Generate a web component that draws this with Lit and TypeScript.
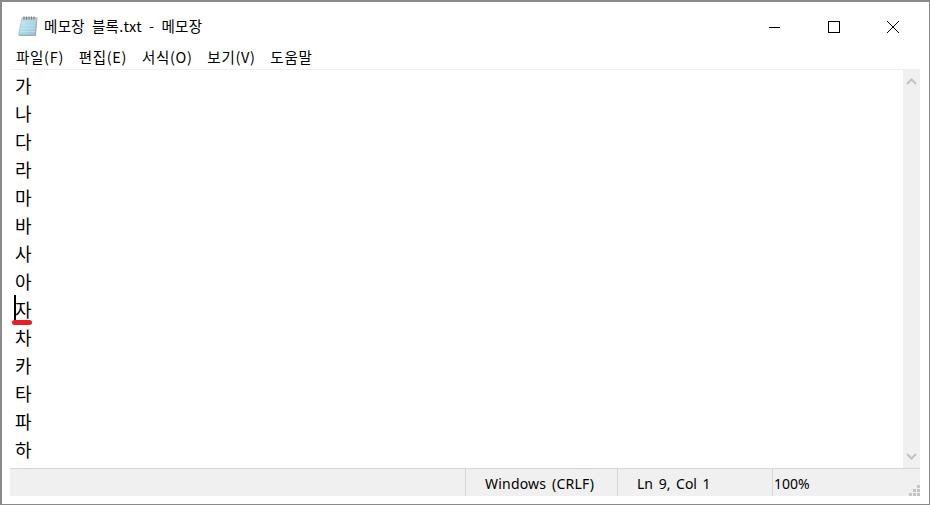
import { LitElement, html, css, svg } from 'lit'
import { customElement } from 'lit/decorators.js'

const MENUS = ['파일(F)', '편집(E)', '서식(O)', '보기(V)', '도움말']
const LINES = ['가', '나', '다', '라', '마', '바', '사', '아', '자', '차', '카', '타', '파', '하']

const notepadIcon = svg`
    <svg class="app-icon" width="20" height="21" viewBox="0 0 20 21">
        <defs>
            <linearGradient id="pad" x1="0" y1="0" x2="1" y2="1">
                <stop offset="0" stop-color="#d4edf4" />
                <stop offset="0.55" stop-color="#a9d8e6" />
                <stop offset="1" stop-color="#8cc3d8" />
            </linearGradient>
        </defs>
        <path d="M4.5 1.5 L19.5 1.5 L18 20 L1 20 Z" fill="#b3a98e" />
        <path d="M4 2 L18.5 2 L17 19 L0.5 19 Z" fill="url(#pad)" stroke="#8fb7c6" stroke-width="0.6" />
        <path d="M3 9.5H17.5M2.6 12.5H17.2M2.2 15.5H17" stroke="#c4e4ee" stroke-width="0.7" />
        <path d="M4.5 1 L18.5 1 L18.2 4.5 L4 4.5 Z" fill="#c5cccf" />
        <path d="M6 0.5v3M8.5 0.5v3M11 0.5v3M13.5 0.5v3M16 0.5v3" stroke="#707c82" stroke-width="1.2" />
    </svg>
`

@customElement('app-root')
export class AppRoot extends LitElement {
    static get styles() {
        return css`
            :host {
                display: block;
                width: 930px;
                height: 506px;
                background: #fff;
                font-family: 'Noto Sans CJK KR', 'Liberation Sans', sans-serif;
                color: #000;
            }

            .window {
                box-sizing: border-box;
                width: 930px;
                height: 505px;
                border: 2px solid #8a8a8a;
                border-width: 2px 1px 1px 2px;
                background: #fff;
                display: flex;
                flex-direction: column;
            }

            .titlebar {
                height: 42px;
                display: flex;
                align-items: center;
                padding: 8px 0 0 16px;
                box-sizing: border-box;
                flex: none;
            }

            .app-icon {
                flex: none;
                margin-right: 6px;
                margin-top: -1px;
            }

            .title {
                font-size: 14.5px;
                line-height: 20px;
                flex: 1;
                white-space: nowrap;
                word-spacing: 3.5px;
                letter-spacing: 0.3px;
                margin-top: -2px;
            }

            .controls {
                display: flex;
                align-items: center;
                margin-right: 7px;
            }

            .controls svg {
                display: block;
            }

            .control {
                width: 59px;
                display: flex;
                justify-content: center;
            }

            .menubar {
                height: 25px;
                display: flex;
                gap: 14.7px;
                align-items: center;
                padding-left: 14px;
                font-size: 14.5px;
                letter-spacing: 0.7px;
                flex: none;
                white-space: nowrap;
            }

            .body {
                flex: 1;
                display: flex;
                flex-direction: column;
                margin: 0 9px 8px 8px;
                min-height: 0;
            }

            .editor-wrap {
                flex: 1;
                display: flex;
                border-top: 1px solid #f0f0f0;
                min-height: 0;
            }

            .editor {
                flex: 1;
                padding: 1px 0 0 5px;
                font-size: 18px;
                line-height: 28px;
                overflow: hidden;
            }

            .line {
                height: 28px;
                position: relative;
            }

            .caret {
                position: absolute;
                left: -1px;
                top: 0;
                width: 2px;
                height: 25px;
                background: #000;
            }

            .underline {
                position: absolute;
                left: -3px;
                top: 25px;
                width: 20px;
                height: 5px;
                border-radius: 2.5px;
                background: #ed1c24;
            }

            .scrollbar {
                width: 17px;
                background: #f0f0f0;
                display: flex;
                flex-direction: column;
                justify-content: space-between;
                align-items: center;
                padding: 8px 0;
                box-sizing: border-box;
            }

            .statusbar {
                height: 28px;
                flex: none;
                background: #f0f0f0;
                border-top: 1px solid #d7d7d7;
                box-sizing: border-box;
                display: flex;
                font-family: 'Noto Sans', 'Liberation Sans', sans-serif;
                font-size: 14px;
                position: relative;
            }

            .cell {
                border-left: 1px solid #d7d7d7;
                box-sizing: border-box;
                display: flex;
                align-items: center;
                white-space: pre;
                padding-top: 1px;
            }

            .spacer {
                flex: none;
                width: 455px;
            }

            .eol {
                width: 152px;
                padding-left: 19px;
                word-spacing: 2px;
                letter-spacing: 0.2px;
            }

            .pos {
                width: 155px;
                padding-left: 19px;
                word-spacing: 2px;
            }

            .zoom {
                flex: 1;
                padding-left: 1px;
            }

            .grip {
                position: absolute;
                right: 0;
                bottom: 0;
            }
        `
    }

    render() {
        return html`
            <div class="window">
                <div class="titlebar">
                    ${notepadIcon}
                    <div class="title">메모장 블록.txt - 메모장</div>
                    <div class="controls">
                        <div class="control">
                            <svg width="12" height="12" viewBox="0 0 12 12"><path d="M0 6.5H11" stroke="#000" /></svg>
                        </div>
                        <div class="control">
                            <svg width="12" height="12" viewBox="0 0 12 12"><rect x="0.5" y="0.5" width="11" height="11" fill="none" stroke="#000" /></svg>
                        </div>
                        <div class="control">
                            <svg width="12" height="12" viewBox="0 0 12 12"><path d="M0 0L12 12M12 0L0 12" stroke="#000" /></svg>
                        </div>
                    </div>
                </div>
                <div class="menubar">
                    ${MENUS.map((m) => html`<span>${m}</span>`)}
                </div>
                <div class="body">
                    <div class="editor-wrap">
                        <div class="editor">
                            ${LINES.map(
                                (l, i) => html`
                                    <div class="line">
                                        ${l}
                                        ${i === 8
                                            ? html`<div class="caret"></div>
                                                  <div class="underline"></div>`
                                            : ''}
                                    </div>
                                `
                            )}
                        </div>
                        <div class="scrollbar">
                            <svg width="11" height="7" viewBox="0 0 11 7"><path d="M1 6L5.5 1.5L10 6" fill="none" stroke="#c2c2c2" stroke-width="2" /></svg>
                            <svg width="11" height="7" viewBox="0 0 11 7"><path d="M1 1L5.5 5.5L10 1" fill="none" stroke="#c2c2c2" stroke-width="2" /></svg>
                        </div>
                    </div>
                    <div class="statusbar">
                        <div class="spacer"></div>
                        <div class="cell eol">Windows (CRLF)</div>
                        <div class="cell pos">Ln 9, Col 1</div>
                        <div class="cell zoom">100%</div>
                        <svg class="grip" width="11" height="11" viewBox="0 0 11 11" fill="#c4c4c4">
                            <rect x="8" y="0" width="3" height="3" />
                            <rect x="4" y="4" width="3" height="3" />
                            <rect x="8" y="4" width="3" height="3" />
                            <rect x="0" y="8" width="3" height="3" />
                            <rect x="4" y="8" width="3" height="3" />
                            <rect x="8" y="8" width="3" height="3" />
                        </svg>
                    </div>
                </div>
            </div>
        `
    }
}
